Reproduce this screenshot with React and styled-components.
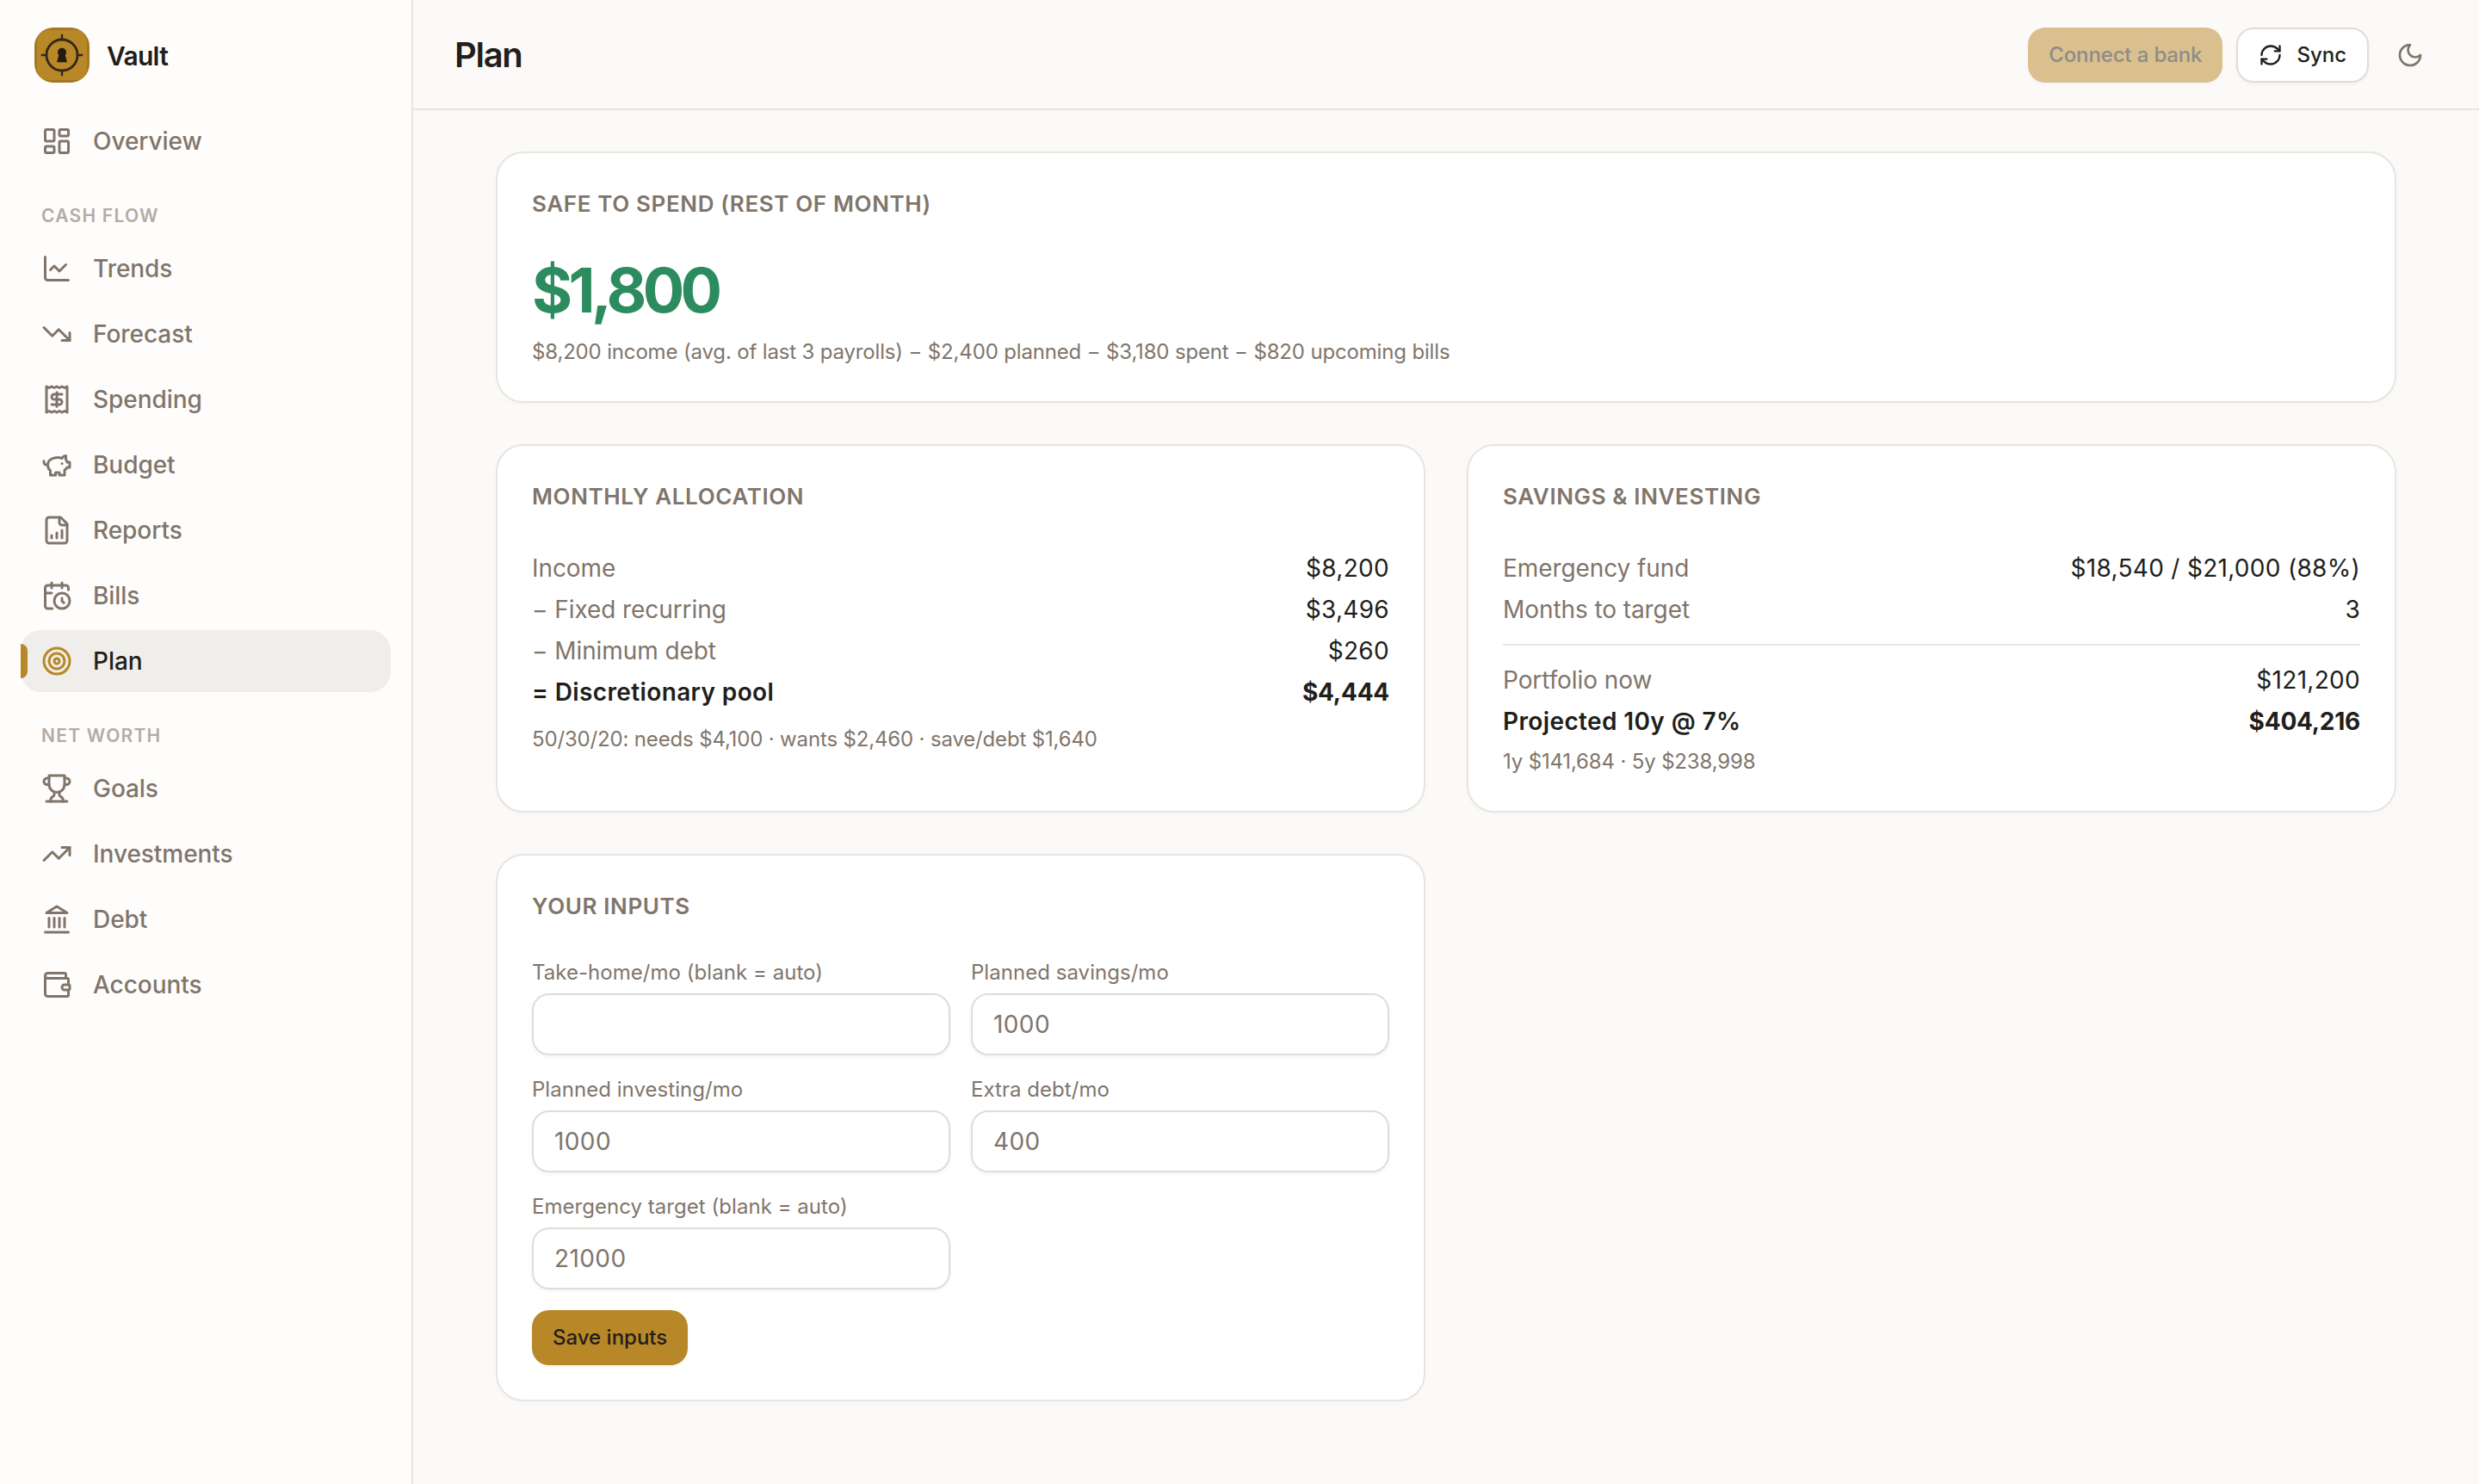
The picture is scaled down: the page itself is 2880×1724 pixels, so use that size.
import React from "react";
import styled, { createGlobalStyle } from "styled-components";
import {
  LayoutDashboard,
  ChartLine,
  TrendingDown,
  Receipt,
  Target,
  TrendingUp,
  Wallet,
  RefreshCw,
} from "lucide-react";

const color = {
  bg: "#fbfaf8",
  sidebar: "#fefdfc",
  white: "#ffffff",
  ink: "#211e1b",
  gray1: "#80756b",
  gray2: "#b3aca5",
  line: "#e8e5e0",
  inputLine: "#e0ddd8",
  active: "#f0eeea",
  gold: "#b88727",
  green: "#2d8c5f",
};

const GlobalStyle = createGlobalStyle`
  * {
    box-sizing: border-box;
  }
  body {
    margin: 0;
    background-color: ${color.bg};
    color: ${color.ink};
    font-family: Inter, "Liberation Sans", sans-serif;
    font-size: 28px;
    line-height: 40px;
  }
  h1, h2, p {
    margin: 0;
  }
  button, input {
    font-family: inherit;
  }
`;

const SLayout = styled.div`
  display: flex;
  height: 1724px;
`;

const SSidebar = styled.aside`
  width: 480px;
  flex-shrink: 0;
  background-color: ${color.sidebar};
  border-right: 2px solid ${color.line};
`;

const SBrand = styled.div`
  height: 128px;
  display: flex;
  align-items: center;
  gap: 20px;
  padding-left: 40px;
`;

const SLogo = styled.svg`
  width: 64px;
  height: 64px;
  border-radius: 22px;
  background-color: ${color.gold};
`;

const SBrandName = styled.span`
  padding-top: 2px;
  font-size: 30px;
  font-weight: 600;
  letter-spacing: -0.7px;
`;

const SNav = styled.nav`
  display: flex;
  flex-direction: column;
  gap: 4px;
  padding: 0 24px;
`;

const SNavHeading = styled.div`
  padding: 31px 24px 5px;
  font-size: 21px;
  line-height: 32px;
  font-weight: 600;
  letter-spacing: 1.25px;
  color: ${color.gray2};
`;

const SNavItem = styled.a`
  position: relative;
  height: 72px;
  display: flex;
  align-items: center;
  gap: 24px;
  padding: 0 24px;
  border-radius: 24px;
  font-weight: 500;
  letter-spacing: -0.05px;
  color: ${({ $active }) => ($active ? color.ink : color.gray1)};
  background-color: ${({ $active }) =>
    $active ? color.active : "transparent"};

  svg {
    color: ${({ $active }) => ($active ? color.gold : "inherit")};
  }
`;

const SMarker = styled.span`
  position: absolute;
  left: 0;
  top: 16px;
  width: 8px;
  height: 40px;
  border-radius: 0 8px 8px 0;
  background-color: ${color.gold};
`;

const SMain = styled.div`
  flex: 1;
  min-width: 0;
`;

const SHeader = styled.header`
  height: 128px;
  display: flex;
  align-items: center;
  justify-content: space-between;
  padding: 2px 48px 0;
  border-bottom: 2px solid ${color.line};
`;

const SPageTitle = styled.h1`
  font-size: 40px;
  line-height: 56px;
  font-weight: 600;
  letter-spacing: -1.3px;
`;

const SActions = styled.div`
  display: flex;
  align-items: center;
  gap: 16px;
`;

const SButton = styled.button`
  height: 64px;
  display: inline-flex;
  align-items: center;
  gap: 16px;
  padding: 0 24px 1px;
  border: 0;
  border-radius: 20px;
  font-size: 24px;
  font-weight: 500;
  letter-spacing: ${({ disabled }) => (disabled ? "-0.14px" : "0")};
  color: ${color.ink};
  background-color: ${color.gold};
  box-shadow: 0 2px 4px rgba(33, 30, 27, 0.04);

  &:disabled {
    opacity: 0.5;
  }
`;

const SOutlineButton = styled(SButton)`
  border: 2px solid ${color.inputLine};
  background-color: ${color.white};
`;

const SIconButton = styled.button`
  width: 64px;
  height: 64px;
  display: flex;
  align-items: center;
  justify-content: center;
  padding: 0;
  border: 0;
  background: none;
  color: ${color.gray1};
`;

const SContent = styled.main`
  display: grid;
  grid-template-columns: 1fr 1fr;
  gap: 48px;
  padding: 48px 96px;
`;

const SCard = styled.section`
  grid-column: ${({ $wide }) => ($wide ? "span 2" : "auto")};
  padding: 40px;
  border: 2px solid ${color.line};
  border-radius: 32px;
  background-color: ${color.white};
  box-shadow: 0 2px 6px rgba(33, 30, 27, 0.02);
`;

const SCardTitle = styled.h2`
  margin-bottom: 44px;
  font-size: 26px;
  line-height: 38px;
  font-weight: 600;
  letter-spacing: 0.62px;
  color: ${color.gray1};
`;

const SAmount = styled.div`
  font-size: 72px;
  line-height: 74px;
  font-weight: 700;
  letter-spacing: -4.6px;
  color: ${color.green};
`;

const SNote = styled.p`
  margin-top: ${({ $top }) => $top}px;
  padding-top: 2px;
  font-size: 24px;
  line-height: 34px;
  letter-spacing: -0.16px;
  color: ${color.gray1};
`;

const SRows = styled.div`
  display: flex;
  flex-direction: column;
  gap: 8px;
`;

const SRow = styled.div`
  display: flex;
  justify-content: space-between;
  color: ${({ $strong }) => ($strong ? color.ink : color.gray1)};
  font-weight: ${({ $strong }) => ($strong ? 600 : 400)};
  letter-spacing: ${({ $strong }) => ($strong ? "0.38px" : "-0.08px")};
`;

const SValue = styled.span`
  color: ${color.ink};
  font-weight: ${({ $strong }) => ($strong ? 700 : 400)};
  letter-spacing: ${({ $strong }) => ($strong ? "-0.25px" : "0.3px")};
`;

const SDivider = styled.div`
  height: 2px;
  margin: 20px 0;
  background-color: ${color.line};
`;

const SForm = styled.div`
  display: grid;
  grid-template-columns: 1fr 1fr;
  gap: 26px 24px;
`;

const SField = styled.label`
  display: flex;
  flex-direction: column;
  gap: 10px;
  font-size: 24px;
  line-height: 28px;
  letter-spacing: 0.04px;
  color: ${color.gray1};
`;

const SInput = styled.input`
  width: 100%;
  height: 72px;
  padding: 0 24px;
  border: 2px solid ${color.inputLine};
  border-radius: 20px;
  background-color: ${color.white};
  font-size: 28px;
  letter-spacing: 0.4px;
  box-shadow: 0 2px 4px rgba(33, 30, 27, 0.05);
  outline: none;

  &::placeholder {
    color: ${color.gray1};
    opacity: 1;
  }
`;

const SFormButton = styled(SButton)`
  margin-top: 24px;
`;

function Glyph({ size = 24, strokeWidth = 2, paths }) {
  return (
    <svg
      width={size}
      height={size}
      viewBox="0 0 24 24"
      fill="none"
      stroke="currentColor"
      strokeWidth={strokeWidth}
      strokeLinecap="round"
      strokeLinejoin="round"
    >
      {paths.map((d) => (
        <path key={d} d={d} />
      ))}
    </svg>
  );
}

const piggyPaths = [
  "M19 5c-1.5 0-2.8 1.4-3 2-3.5-1.5-11-.3-11 5 0 1.8 0 3 2 4.5V20h4v-2h3v2h4v-4c1-.5 1.7-1 2-2h2v-4h-2c0-1-.5-1.5-1-2V5z",
  "M2 9v1c0 1.1.9 2 2 2h1",
  "M16 11h.01",
];
const reportPaths = [
  "M15 2H6a2 2 0 0 0-2 2v16a2 2 0 0 0 2 2h12a2 2 0 0 0 2-2V7Z",
  "M14 2v4a2 2 0 0 0 2 2h4",
  "M8 18v-2",
  "M12 18v-4",
  "M16 18v-6",
];
const billsPaths = [
  "M21 7.5V6a2 2 0 0 0-2-2H5a2 2 0 0 0-2 2v14a2 2 0 0 0 2 2h3.5",
  "M16 2v4",
  "M8 2v4",
  "M3 10h5",
  "M17.5 17.5 16 16.3V14",
  "M22 16a6 6 0 1 1-12 0 6 6 0 0 1 12 0Z",
];
const trophyPaths = [
  "M6 9H4.5a2.5 2.5 0 0 1 0-5H6",
  "M18 9h1.5a2.5 2.5 0 0 0 0-5H18",
  "M4 22h16",
  "M10 14.66V17c0 .55-.47.98-.97 1.21C7.85 18.75 7 20.24 7 22",
  "M14 14.66V17c0 .55.47.98.97 1.21C16.15 18.75 17 20.24 17 22",
  "M18 2H6v7a6 6 0 0 0 12 0V2Z",
];
const landmarkPaths = [
  "M3 22h18",
  "M6 18v-7",
  "M10 18v-7",
  "M14 18v-7",
  "M18 18v-7",
  "M12 2l8 5H4z",
];
const moonPaths = ["M12 3a6 6 0 0 0 9 9 9 9 0 1 1-9-9Z"];

const PiggyBank = (props) => <Glyph {...props} paths={piggyPaths} />;
const Report = (props) => <Glyph {...props} paths={reportPaths} />;
const CalendarClock = (props) => <Glyph {...props} paths={billsPaths} />;
const Trophy = (props) => <Glyph {...props} paths={trophyPaths} />;
const Landmark = (props) => <Glyph {...props} paths={landmarkPaths} />;
const Moon = (props) => <Glyph {...props} paths={moonPaths} />;

const overview = [{ label: "Overview", icon: LayoutDashboard }];

const cashFlow = [
  { label: "Trends", icon: ChartLine },
  { label: "Forecast", icon: TrendingDown },
  { label: "Spending", icon: Receipt },
  { label: "Budget", icon: PiggyBank },
  { label: "Reports", icon: Report },
  { label: "Bills", icon: CalendarClock },
  { label: "Plan", icon: Target, active: true },
];

const netWorth = [
  { label: "Goals", icon: Trophy },
  { label: "Investments", icon: TrendingUp },
  { label: "Debt", icon: Landmark },
  { label: "Accounts", icon: Wallet },
];

const allocation = [
  { label: "Income", value: "$8,200" },
  { label: "− Fixed recurring", value: "$3,496" },
  { label: "− Minimum debt", value: "$260" },
  { label: "= Discretionary pool", value: "$4,444", strong: true },
];

const savings = [
  { label: "Emergency fund", value: "$18,540 / $21,000 (88%)" },
  { label: "Months to target", value: "3" },
];

const portfolio = [
  { label: "Portfolio now", value: "$121,200" },
  { label: "Projected 10y @ 7%", value: "$404,216", strong: true },
];

const fields = [
  { name: "takeHome", label: "Take-home/mo (blank = auto)", placeholder: "" },
  { name: "savings", label: "Planned savings/mo", placeholder: "1000" },
  { name: "investing", label: "Planned investing/mo", placeholder: "1000" },
  { name: "extraDebt", label: "Extra debt/mo", placeholder: "400" },
  {
    name: "emergency",
    label: "Emergency target (blank = auto)",
    placeholder: "21000",
  },
];

function Logo() {
  return (
    <SLogo viewBox="0 0 64 64" fill="none">
      <rect
        x="1.5"
        y="1.5"
        width="61"
        height="61"
        rx="14"
        stroke="#2b2118"
        strokeOpacity="0.15"
        strokeWidth="3"
      />
      <circle cx="32" cy="32" r="18" stroke="#33281a" strokeWidth="2.8" />
      <path
        d="M32 8.8v4.5M32 50.7v4.5M8.8 32h4.5M50.7 32h4.5"
        stroke="#33281a"
        strokeWidth="2.4"
        strokeLinecap="round"
      />
      <circle cx="32" cy="28.8" r="5" fill="#241a14" />
      <path d="M28.5 31h7l2.5 9.3H26z" fill="#241a14" />
    </SLogo>
  );
}

function NavItems({ items }) {
  return items.map(({ label, icon: Icon, active }) => (
    <SNavItem key={label} $active={active}>
      {active && <SMarker />}
      <Icon size={36} strokeWidth={2} />
      {label}
    </SNavItem>
  ));
}

function Rows({ items }) {
  return (
    <SRows>
      {items.map(({ label, value, strong }) => (
        <SRow key={label} $strong={strong}>
          <span>{label}</span>
          <SValue $strong={strong}>{value}</SValue>
        </SRow>
      ))}
    </SRows>
  );
}

function App() {
  return (
    <>
      <GlobalStyle />
      <SLayout>
        <SSidebar>
          <SBrand>
            <Logo />
            <SBrandName>Vault</SBrandName>
          </SBrand>
          <SNav>
            <NavItems items={overview} />
            <SNavHeading>CASH FLOW</SNavHeading>
            <NavItems items={cashFlow} />
            <SNavHeading>NET WORTH</SNavHeading>
            <NavItems items={netWorth} />
          </SNav>
        </SSidebar>
        <SMain>
          <SHeader>
            <SPageTitle>Plan</SPageTitle>
            <SActions>
              <SButton disabled>Connect a bank</SButton>
              <SOutlineButton>
                <RefreshCw size={28} />
                Sync
              </SOutlineButton>
              <SIconButton>
                <Moon size={32} />
              </SIconButton>
            </SActions>
          </SHeader>
          <SContent>
            <SCard $wide>
              <SCardTitle>SAFE TO SPEND (REST OF MONTH)</SCardTitle>
              <SAmount>$1,800</SAmount>
              <SNote $top={16}>
                $8,200 income (avg. of last 3 payrolls) − $2,400 planned −
                $3,180 spent − $820 upcoming bills
              </SNote>
            </SCard>
            <SCard>
              <SCardTitle>MONTHLY ALLOCATION</SCardTitle>
              <Rows items={allocation} />
              <SNote $top={16}>
                50/30/20: needs $4,100 · wants $2,460 · save/debt $1,640
              </SNote>
            </SCard>
            <SCard>
              <SCardTitle>SAVINGS &amp; INVESTING</SCardTitle>
              <Rows items={savings} />
              <SDivider />
              <Rows items={portfolio} />
              <SNote $top={8}>1y $141,684 · 5y $238,998</SNote>
            </SCard>
            <SCard>
              <SCardTitle>YOUR INPUTS</SCardTitle>
              <SForm>
                {fields.map(({ name, label, placeholder }) => (
                  <SField key={name}>
                    {label}
                    <SInput name={name} placeholder={placeholder} />
                  </SField>
                ))}
              </SForm>
              <SFormButton>Save inputs</SFormButton>
            </SCard>
          </SContent>
        </SMain>
      </SLayout>
    </>
  );
}

export default App;
